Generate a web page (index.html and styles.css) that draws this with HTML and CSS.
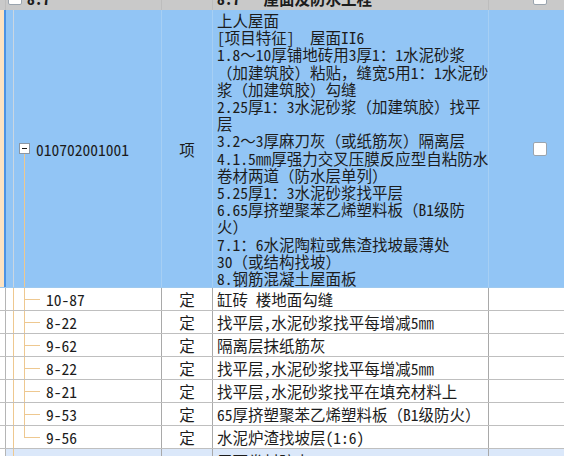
FILE: index.html
```html
<!DOCTYPE html>
<html lang="zh">
<head>
<meta charset="utf-8">
<title>清单</title>
<link rel="stylesheet" href="styles.css">
</head>
<body>
<div class="sheet">
  <div class="row head">
    <div class="c gut"></div>
    <div class="c tree"><span class="cb"></span><span class="hcode">8.7</span></div>
    <div class="c type"></div>
    <div class="c desc">8.7   屋面及防水工程</div>
    <div class="c chk"><span class="cb"></span></div>
  </div>

  <div class="row sel">
    <div class="c gut"></div>
    <div class="c tree"><span class="box"><span class="minus"></span></span><span class="code">010702001001</span></div>
    <div class="c type">项</div>
    <div class="c desc">上人屋面<br>[项目特征]  屋面II6<br>1.8～10厚铺地砖用3厚1：1水泥砂浆<br>（加建筑胶）粘贴，缝宽5用1：1水泥砂<br>浆（加建筑胶）勾缝<br>2.25厚1：3水泥砂浆（加建筑胶）找平<br>层<br>3.2～3厚麻刀灰（或纸筋灰）隔离层<br>4.1.5㎜厚强力交叉压膜反应型自粘防水<br>卷材两道（防水层单列）<br>5.25厚1：3水泥砂浆找平层<br>6.65厚挤塑聚苯乙烯塑料板（B1级防<br>火）<br>7.1：6水泥陶粒或焦渣找坡最薄处<br>30（或结构找坡）<br>8.钢筋混凝土屋面板</div>
    <div class="c chk"><span class="cb"></span></div>
  </div>

  <div class="row sub">
    <div class="c gut"></div>
    <div class="c tree"><span class="code">10-87</span></div>
    <div class="c type">定</div>
    <div class="c desc">缸砖 楼地面勾缝</div>
    <div class="c chk"></div>
  </div>
  <div class="row sub">
    <div class="c gut"></div>
    <div class="c tree"><span class="code">8-22</span></div>
    <div class="c type">定</div>
    <div class="c desc">找平层,水泥砂浆找平每增减5㎜</div>
    <div class="c chk"></div>
  </div>
  <div class="row sub">
    <div class="c gut"></div>
    <div class="c tree"><span class="code">9-62</span></div>
    <div class="c type">定</div>
    <div class="c desc">隔离层抹纸筋灰</div>
    <div class="c chk"></div>
  </div>
  <div class="row sub">
    <div class="c gut"></div>
    <div class="c tree"><span class="code">8-22</span></div>
    <div class="c type">定</div>
    <div class="c desc">找平层,水泥砂浆找平每增减5㎜</div>
    <div class="c chk"></div>
  </div>
  <div class="row sub">
    <div class="c gut"></div>
    <div class="c tree"><span class="code">8-21</span></div>
    <div class="c type">定</div>
    <div class="c desc">找平层,水泥砂浆找平在填充材料上</div>
    <div class="c chk"></div>
  </div>
  <div class="row sub">
    <div class="c gut"></div>
    <div class="c tree"><span class="code">9-53</span></div>
    <div class="c type">定</div>
    <div class="c desc">65厚挤塑聚苯乙烯塑料板（B1级防火）</div>
    <div class="c chk"></div>
  </div>
  <div class="row sub last">
    <div class="c gut"></div>
    <div class="c tree"><span class="code">9-56</span></div>
    <div class="c type">定</div>
    <div class="c desc">水泥炉渣找坡层(1:6)</div>
    <div class="c chk"></div>
  </div>

  <div class="row next">
    <div class="c gut"></div>
    <div class="c tree"></div>
    <div class="c type"></div>
    <div class="c desc">屋面卷材防水</div>
    <div class="c chk"></div>
  </div>
</div>
</body>
</html>
```
FILE: styles.css
```css
html, body {
  margin: 0;
  padding: 0;
  width: 564px;
  height: 456px;
  overflow: hidden;
  background: #ffffff;
}

.sheet {
  margin-top: -14px;
  width: 600px;
  font-family: "Noto Sans Mono CJK SC", "Noto Sans CJK SC", sans-serif;
  font-size: 15.5px;
  color: #1c1c1c;
}

.row {
  display: grid;
  grid-template-columns: 6px 156px 51px 276px 111px;
}

.c {
  box-sizing: border-box;
  border-right: 1px solid #a9a9a9;
  display: flex;
  align-items: center;
}

.gut {
  border-right: 1px solid #b5b5b5;
}

.type {
  justify-content: center;
}

.desc {
  padding-left: 4px;
  white-space: pre;
}

.chk {
  justify-content: flex-start;
  padding-left: 44px;
  border-right: none;
}

.cb {
  display: inline-block;
  box-sizing: border-box;
  width: 14px;
  height: 14px;
  background: #ffffff;
  border: 1px solid #9aa4ae;
  border-radius: 2px;
}

/* header row */
.head {
  height: 24px;
  background: #c9c9c9;
  font-weight: bold;
}
.head .c {
  border-right-color: #bdbdbd;
}
.head .tree {
  padding-left: 2px;
}
.head .hcode {
  margin-left: 5px;
}

/* selected bill item row */
.sel {
  background: #92c5f5;
  border-bottom: 1px solid #9ec9ef;
}
.sel .c {
  border-right-color: #a6cff4;
}
.sel .gut {
  background: #fde3c2;
  border-right: 2px solid #4c93e4;
}
.sel .desc {
  display: block;
  line-height: 17.2px;
  padding-top: 2px;
  height: 277px;
  box-sizing: border-box;
}
.sel .tree {
  padding-left: 13px;
  background:
    linear-gradient(#c9d6e2, #c9d6e2) 7px 0 / 1px 100% no-repeat,
    linear-gradient(#eec890, #eec890) 18px 100% / 1px 50% no-repeat;
}
.box {
  display: inline-flex;
  align-items: center;
  justify-content: center;
  box-sizing: border-box;
  width: 11px;
  height: 11px;
  background: #ffffff;
  border: 1px solid #8a96a4;
}
.minus {
  display: block;
  width: 5px;
  height: 1px;
  background: #1a1a1a;
}
.sel .code {
  margin-left: 6px;
}

/* quota sub rows */
.sub {
  height: 23px;
  border-bottom: 1px solid #bfbfbf;
  box-sizing: border-box;
}
.sub .tree {
  padding-left: 40px;
  background:
    linear-gradient(#eec890, #eec890) 7px 0 / 1px 100% no-repeat,
    linear-gradient(#eec890, #eec890) 18px 0 / 1px 100% no-repeat,
    linear-gradient(#eec890, #eec890) 18px 50% / 16px 1px no-repeat;
  background-color: #ffffff;
}
.sub.last .tree {
  background:
    linear-gradient(#eec890, #eec890) 7px 0 / 1px 100% no-repeat,
    linear-gradient(#eec890, #eec890) 18px 0 / 1px 50% no-repeat,
    linear-gradient(#eec890, #eec890) 18px 50% / 16px 1px no-repeat;
}

/* next (partially visible) row */
.next {
  height: 23px;
  background: #dbe8fa;
}
.next .gut {
  background: #ffffff;
}
.next .tree {
  background: linear-gradient(#eec890, #eec890) 7px 0 / 1px 100% no-repeat;
}
```
